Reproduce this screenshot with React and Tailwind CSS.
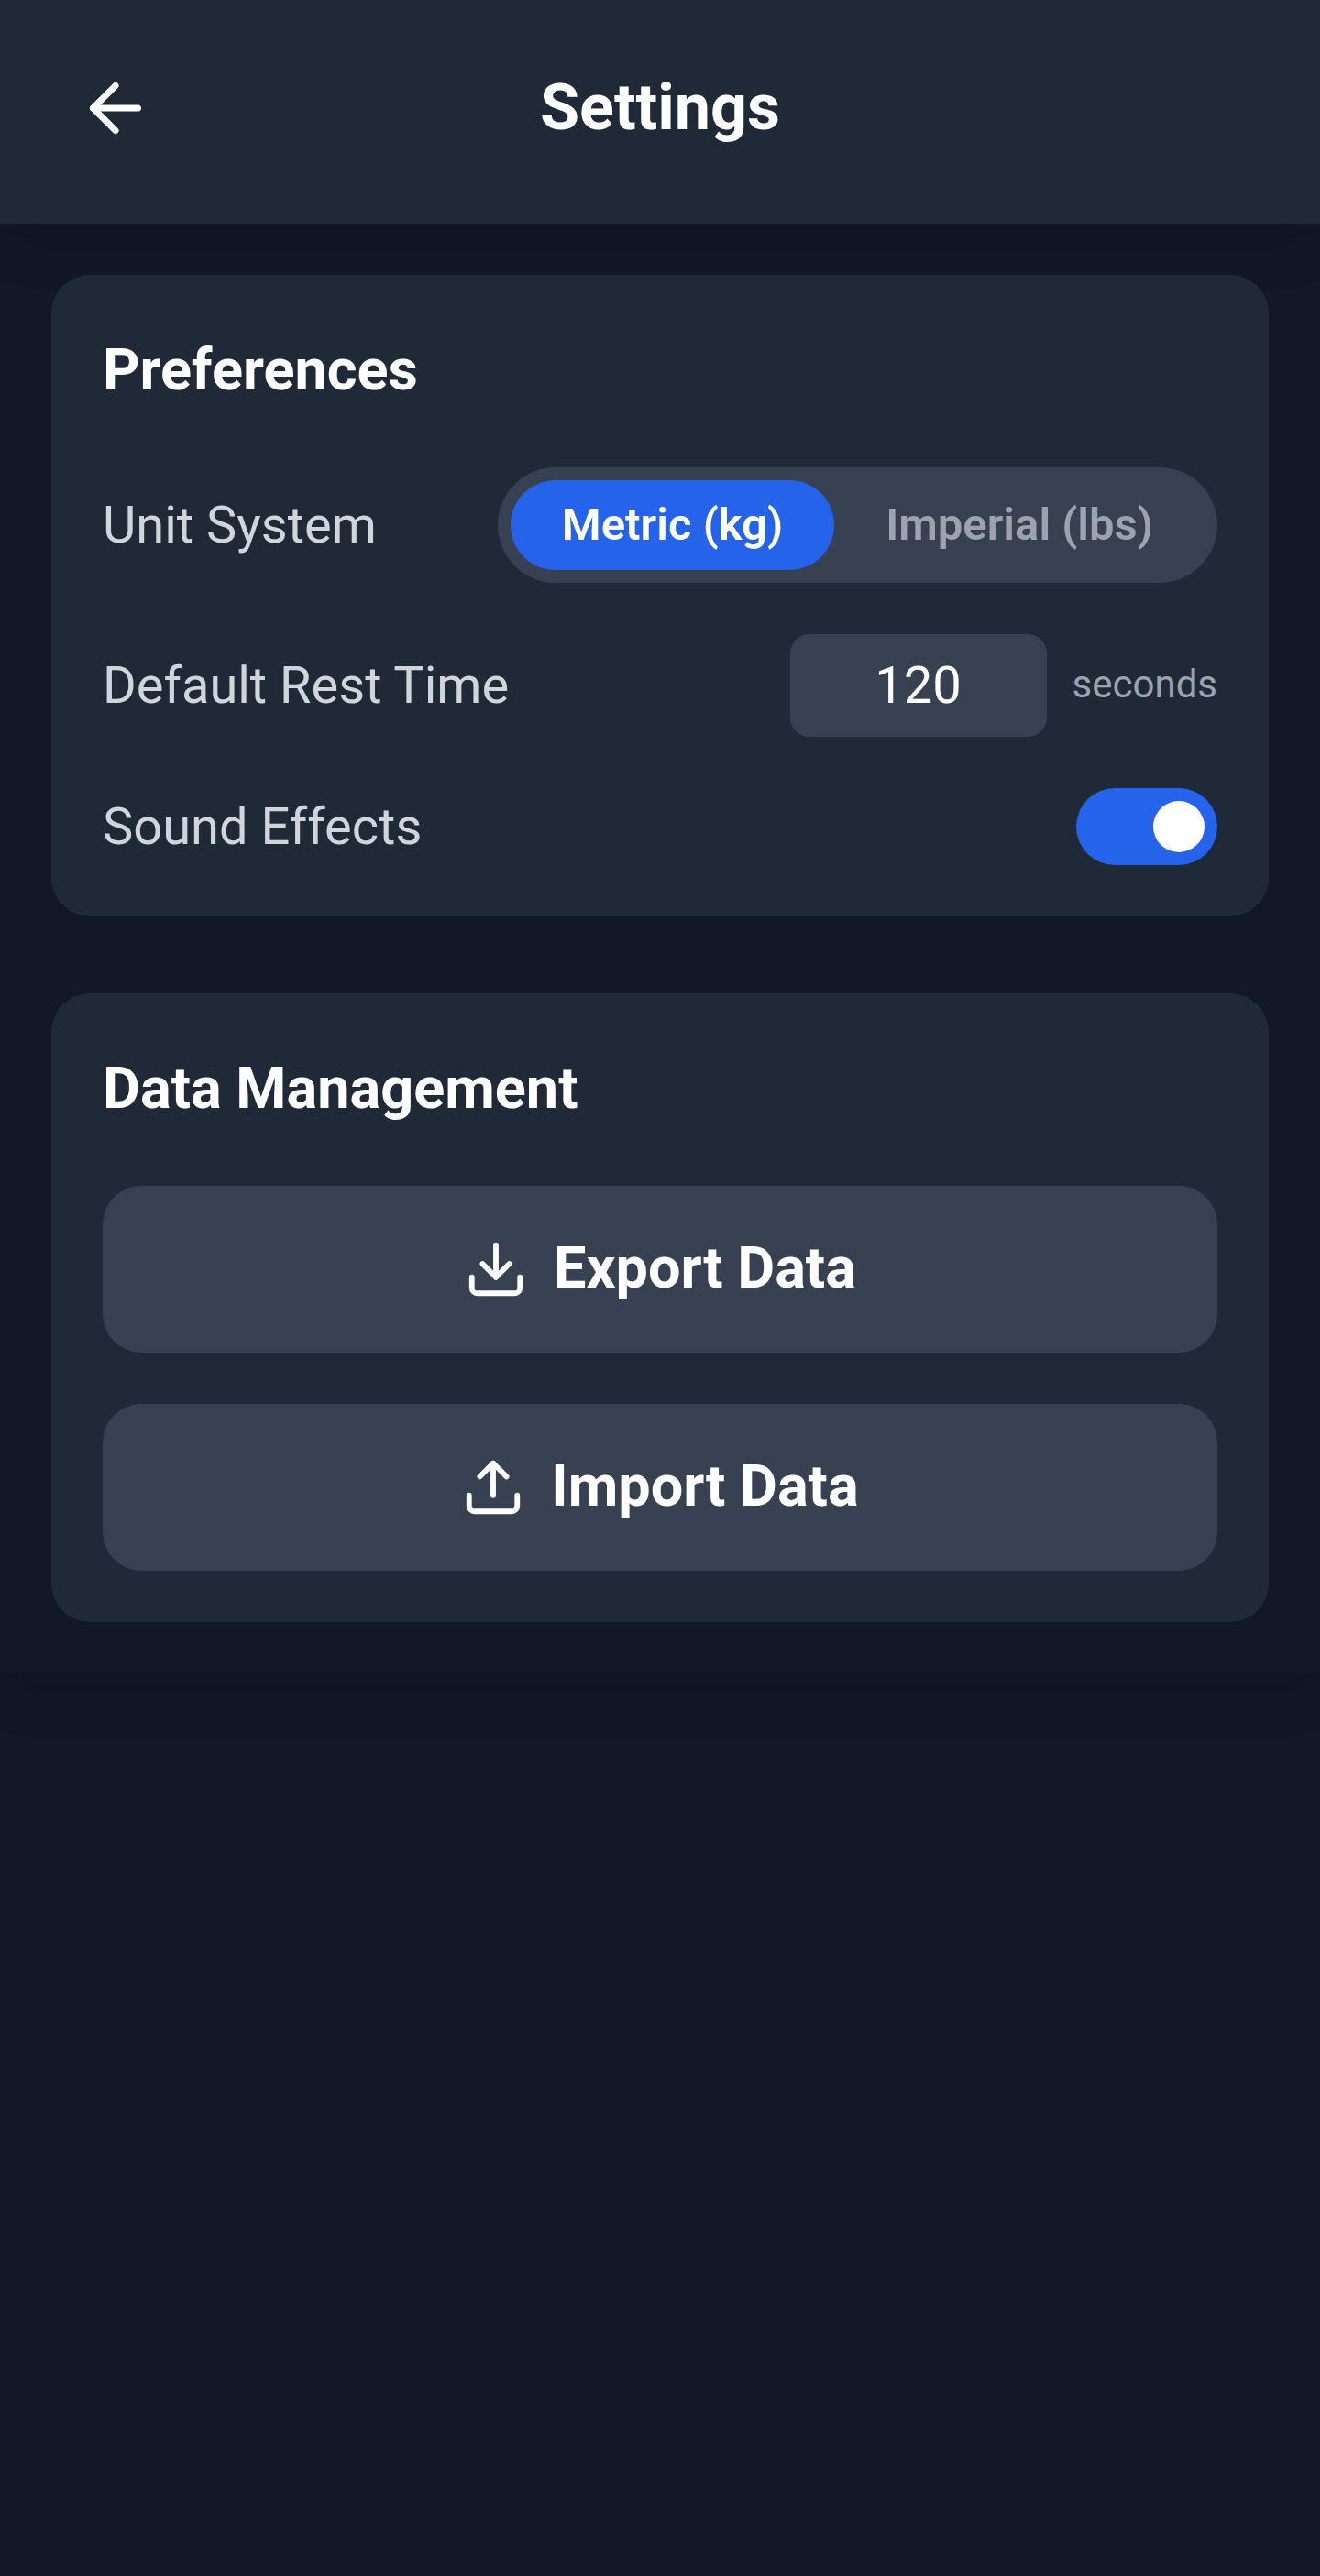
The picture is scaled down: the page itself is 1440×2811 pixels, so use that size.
import { useState } from "react";
import { ArrowLeft, Download, Upload } from "lucide-react";

function Card({ title, children }) {
  return (
    <section className="flex flex-col gap-14 rounded-[42px] bg-[#1f2937] p-14">
      <h2 className="pb-0.5 text-[63px] leading-[96px] font-bold text-white">{title}</h2>
      {children}
    </section>
  );
}

function Row({ label, children }) {
  return (
    <div className="flex items-center justify-between">
      <span className="text-[56px] leading-[84px] text-[#d1d5db]">{label}</span>
      {children}
    </div>
  );
}

function UnitButton({ active, onClick, children }) {
  return (
    <button
      type="button"
      onClick={onClick}
      className={
        "rounded-full px-14 py-3.5 text-[49px] leading-[70px] font-semibold " +
        (active ? "bg-[#2563eb] text-white" : "text-[#9ca3af]")
      }
    >
      {children}
    </button>
  );
}

function ActionButton({ icon: Icon, children }) {
  return (
    <button
      type="button"
      className="flex h-[182px] w-full items-center justify-center gap-7 rounded-[42px] bg-[#374151] text-[63px] leading-[96px] font-bold text-white"
    >
      <Icon size={70} strokeWidth={2} />
      <span className="pb-0.5">{children}</span>
    </button>
  );
}

export default function App() {
  const [unit, setUnit] = useState("kg");
  const [rest, setRest] = useState("120");
  const [sound, setSound] = useState(true);

  return (
    <div className="min-h-screen overflow-hidden bg-[#111827] font-[Roboto,sans-serif]">
      <div className="shadow-[0_35px_52.5px_-10.5px_rgba(0,0,0,0.1),0_14px_21px_-14px_rgba(0,0,0,0.1)]">
        <header className="grid h-[244px] grid-cols-[84px_1fr_84px] items-center bg-[#1f2937] px-[84px] pb-2 shadow-[0_35px_52.5px_-10.5px_rgba(0,0,0,0.1),0_14px_21px_-14px_rgba(0,0,0,0.1)]">
          <button type="button" aria-label="Back" className="text-white">
            <ArrowLeft size={84} strokeWidth={2} />
          </button>
          <h1 className="pb-0.5 text-center text-[70px] leading-[96px] font-bold text-white">Settings</h1>
        </header>
        <main className="flex flex-col gap-[84px] p-14">
          <Card title="Preferences">
            <Row label="Unit System">
              <div className="flex rounded-full bg-[#374151] p-3.5">
                <UnitButton active={unit === "kg"} onClick={() => setUnit("kg")}>
                  Metric (kg)
                </UnitButton>
                <UnitButton active={unit === "lbs"} onClick={() => setUnit("lbs")}>
                  Imperial (lbs)
                </UnitButton>
              </div>
            </Row>
            <Row label="Default Rest Time">
              <div className="flex items-center gap-7">
                <input
                  value={rest}
                  onChange={(e) => setRest(e.target.value)}
                  className="h-28 w-[280px] rounded-[21px] bg-[#374151] text-center text-[56px] leading-[84px] text-white outline-none"
                />
                <span className="pb-0.5 text-[42px] leading-[54px] text-[#9ca3af]">seconds</span>
              </div>
            </Row>
            <Row label="Sound Effects">
              <button
                type="button"
                role="switch"
                aria-checked={sound}
                aria-label="Sound Effects"
                onClick={() => setSound(!sound)}
                className={
                  "flex h-[84px] w-[154px] items-center rounded-full p-3.5 " +
                  (sound ? "justify-end bg-[#2563eb]" : "justify-start bg-[#4b5563]")
                }
              >
                <span className="size-14 rounded-full bg-white" />
              </button>
            </Row>
          </Card>
          <Card title="Data Management">
            <ActionButton icon={Download}>Export Data</ActionButton>
            <ActionButton icon={Upload}>Import Data</ActionButton>
          </Card>
        </main>
      </div>
    </div>
  );
}
